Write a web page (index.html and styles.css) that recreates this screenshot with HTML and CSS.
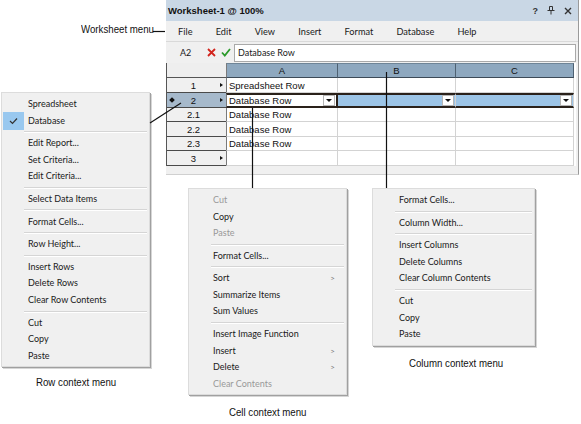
FILE: index.html
```html
<!DOCTYPE html>
<html>
<head>
<meta charset="utf-8">
<link rel="stylesheet" href="styles.css">
</head>
<body>
<div class="canvas">
  <div class="ws">
    <div class="titlebar">
      <span class="title">Worksheet-1 @ 100%</span>
      <span class="tools">
        <span class="q">?</span>
        <svg class="pin" width="8" height="9" viewBox="0 0 8 9"><path d="M2.5 0.5h3v4h-3z M0.5 4.5h7 M4 4.5v4" fill="none" stroke="#333" stroke-width="1"/></svg>
        <svg class="close" width="8" height="8" viewBox="0 0 8 8"><path d="M1 1L7 7M7 1L1 7" stroke="#333" stroke-width="1.4"/></svg>
      </span>
    </div>
    <div class="menubar">
      <span>File</span><span>Edit</span><span>View</span><span>Insert</span><span>Format</span><span>Database</span><span>Help</span>
    </div>
    <div class="fbar">
      <span class="ref">A2</span>
      <svg class="xicon" width="9" height="9" viewBox="0 0 9 9"><path d="M1 1L8 8M8 1L1 8" stroke="#d2241c" stroke-width="1.8"/></svg>
      <svg class="okicon" width="10" height="9" viewBox="0 0 10 9"><path d="M1 4.5L3.8 7.5L9 1" fill="none" stroke="#2a9a2a" stroke-width="1.8"/></svg>
      <div class="input">Database Row</div>
    </div>
    <div class="grid">
      <div class="row hdr">
        <div class="rh"></div>
        <div class="c a">A</div>
        <div class="c b">B</div>
        <div class="c cc">C</div>
      </div>
      <div class="row">
        <div class="rh"><span class="num">1</span><span class="arr"></span></div>
        <div class="c a">Spreadsheet Row</div>
        <div class="c b"></div>
        <div class="c cc"></div>
      </div>
      <div class="row sel">
        <div class="rh"><span class="dot"></span><span class="num">2</span><span class="arr"></span></div>
        <div class="c a cur">Database Row<span class="dd"></span></div>
        <div class="c b hl"><span class="dd"></span></div>
        <div class="c cc hl"><span class="dd"></span></div>
      </div>
      <div class="row short">
        <div class="rh"><span class="num">2.1</span><span class="arr none"></span></div>
        <div class="c a">Database Row</div>
        <div class="c b"></div>
        <div class="c cc"></div>
      </div>
      <div class="row">
        <div class="rh"><span class="num">2.2</span><span class="arr none"></span></div>
        <div class="c a">Database Row</div>
        <div class="c b"></div>
        <div class="c cc"></div>
      </div>
      <div class="row short">
        <div class="rh"><span class="num">2.3</span><span class="arr none"></span></div>
        <div class="c a">Database Row</div>
        <div class="c b"></div>
        <div class="c cc"></div>
      </div>
      <div class="row">
        <div class="rh"><span class="num">3</span><span class="arr"></span></div>
        <div class="c a"></div>
        <div class="c b"></div>
        <div class="c cc"></div>
      </div>
    </div>
  </div>

  <div class="menu rowmenu">
    <div class="mi">Spreadsheet</div>
    <div class="mi"><span class="chk"><svg width="9" height="8" viewBox="0 0 9 8"><path d="M1 4L3.5 6.5L8 1.5" fill="none" stroke="#333" stroke-width="1.2"/></svg></span>Database</div>
    <div class="sep"></div>
    <div class="mi">Edit Report...</div>
    <div class="mi">Set Criteria...</div>
    <div class="mi">Edit Criteria...</div>
    <div class="sep"></div>
    <div class="mi">Select Data Items</div>
    <div class="sep"></div>
    <div class="mi">Format Cells...</div>
    <div class="sep"></div>
    <div class="mi">Row Height...</div>
    <div class="sep"></div>
    <div class="mi">Insert Rows</div>
    <div class="mi">Delete Rows</div>
    <div class="mi">Clear Row Contents</div>
    <div class="sep"></div>
    <div class="mi">Cut</div>
    <div class="mi">Copy</div>
    <div class="mi">Paste</div>
  </div>

  <div class="menu cellmenu">
    <div class="mi dis">Cut</div>
    <div class="mi">Copy</div>
    <div class="mi dis">Paste</div>
    <div class="sep"></div>
    <div class="mi">Format Cells...</div>
    <div class="sep"></div>
    <div class="mi">Sort<span class="sub">&gt;</span></div>
    <div class="mi">Summarize Items</div>
    <div class="mi">Sum Values</div>
    <div class="sep"></div>
    <div class="mi">Insert Image Function</div>
    <div class="mi">Insert<span class="sub">&gt;</span></div>
    <div class="mi">Delete<span class="sub">&gt;</span></div>
    <div class="mi dis">Clear Contents</div>
  </div>

  <div class="menu colmenu">
    <div class="mi">Format Cells...</div>
    <div class="sep"></div>
    <div class="mi">Column Width...</div>
    <div class="sep"></div>
    <div class="mi">Insert Columns</div>
    <div class="mi">Delete Columns</div>
    <div class="mi">Clear Column Contents</div>
    <div class="sep"></div>
    <div class="mi">Cut</div>
    <div class="mi">Copy</div>
    <div class="mi">Paste</div>
  </div>

  <div class="label lbl-ws">Worksheet menu</div>
  <div class="label lbl-row">Row context menu</div>
  <div class="label lbl-cell">Cell context menu</div>
  <div class="label lbl-col">Column context menu</div>

  <svg class="lines" width="581" height="424" viewBox="0 0 581 424">
    <g stroke="#111" stroke-width="1.2" fill="none">
      <path d="M153 31.5H165"/>
      <path d="M150 123L181 103"/>
      <path d="M252.5 108V188"/>
      <path d="M386.5 72V188"/>
    </g>
  </svg>
</div>
</body>
</html>
```

FILE: styles.css
```css
* { box-sizing: border-box; }
body { margin: 0; background: #fff; }
.canvas {
  position: relative;
  width: 581px;
  height: 424px;
  overflow: hidden;
  font-family: Lato, "Open Sans", sans-serif;
  font-size: 9px;
  color: #1a1a1a;
}

/* worksheet window */
.ws {
  position: absolute;
  left: 166px;
  top: 0;
  width: 413px;
  height: 175px;
  background: #f0f0f0;
  border-right: 1px solid #9a9a9a;
  border-bottom: 1px solid #d0d0d0;
  display: flex;
  flex-direction: column;
}
.titlebar {
  height: 21px;
  background: #c9d7e5;
  display: flex;
  align-items: center;
  justify-content: space-between;
  padding: 0 6px 0 2px;
}
.title { font: bold 9.5px "Liberation Sans", Arial, sans-serif; color: #111; }
.tools { display: flex; align-items: center; gap: 9px; }
.q { font: bold 9px "Liberation Sans", sans-serif; color: #333; }
.menubar {
  height: 21px;
  display: flex;
  align-items: center;
  padding-left: 0.5px;
  border-bottom: 1px solid #d9d9d9;
  font-size: 9.2px;
}
.menubar span { padding: 0 11.6px; }
.fbar {
  height: 21px;
  display: flex;
  align-items: center;
  padding-left: 14px;
}
.ref { width: 27px; }
.okicon { margin-left: 5px; }
.input {
  margin-left: 3px;
  width: 342px;
  height: 18px;
  background: #fff;
  border: 1px solid #a9a9a9;
  padding-left: 3px;
  line-height: 16px;
}

/* grid */
.grid {
  width: 410px;
  background: #fff;
  border-left: 1px solid #555;
  font: 9.5px "Liberation Sans", Arial, sans-serif;
  color: #111;
}
.row { display: flex; height: 15px; }
.row.short { height: 14px; }
.rh {
  width: 59px;
  display: flex;
  align-items: center;
  background: #f0f0f0;
  border-bottom: 1px solid #4a4a4a;
  position: relative;
}
.num { flex: 1; text-align: center; }
.arr {
  width: 6px;
  height: 100%;
  display: flex;
  align-items: center;
}
.arr::before {
  content: "";
  border-left: 3px solid #111;
  border-top: 2.5px solid transparent;
  border-bottom: 2.5px solid transparent;
}
.arr.none::before { display: none; }
.dot {
  position: absolute;
  left: 3px;
  top: 5px;
  width: 4px;
  height: 4px;
  background: #111;
  transform: rotate(45deg);
}
.c {
  border-right: 1px solid #d3d3d3;
  border-bottom: 1px solid #d3d3d3;
  padding-left: 2px;
  display: flex;
  align-items: center;
  position: relative;
  white-space: nowrap;
}
.c.a { width: 112px; border-left: 1px solid #7a7a7a; }
.c.b { width: 118px; }
.c.cc { width: 118px; }
.hdr { height: 15px; }
.hdr .rh { background: #eeeeee; border-bottom: 1px solid #555; }
.hdr .c {
  background: #8ea8bf;
  justify-content: center;
  padding-left: 0;
  border-right: 1px solid #4e6172;
  border-bottom: 1px solid #3c4a57;
  border-top: 1px solid #6f8597;
}
.sel .rh { background: #a6b9cb; }
.sel .c {
  border-top: 2px solid #2a211a;
  border-bottom: 2px solid #2a211a;
}
.sel .c.cur { border-right: 2px solid #2a211a; }
.c.hl { background: #9cc4e6; }
.dd {
  position: absolute;
  right: 1px;
  top: 0;
  width: 12px;
  height: 11px;
  background: #fff;
  border: 1px solid #b5b5b5;
  display: flex;
  align-items: center;
  justify-content: center;
}
.dd::before {
  content: "";
  border-top: 3px solid #111;
  border-left: 3px solid transparent;
  border-right: 3px solid transparent;
}

/* context menus */
.menu {
  position: absolute;
  background: #f0f0f0;
  border: 1px solid #dcdcdc;
  box-shadow: 1px 1px 0 #a0a0a0, 2px 2px 0 #d6d6d6;
  padding: 3px 2px 2px 2px;
}
.rowmenu { left: 1px; top: 92px; width: 149px; }
.cellmenu { left: 188px; top: 188px; width: 159px; }
.colmenu { left: 372px; top: 188px; width: 163px; }
.mi {
  height: 16.5px;
  line-height: 16.5px;
  padding-left: 24px;
  position: relative;
  white-space: nowrap;
}
.cellmenu .mi { padding-left: 22px; }
.mi.dis { color: #999; }
.sep {
  height: 2px;
  border-top: 1px solid #d5d5d5;
  border-bottom: 1px solid #fff;
  margin: 2.1px 0 2.1px 20px;
}
.chk {
  position: absolute;
  left: -1px;
  top: -1px;
  width: 21px;
  height: 18px;
  background: #99c8ef;
  display: flex;
  align-items: center;
  justify-content: center;
}
.sub {
  position: absolute;
  right: 9px;
  top: 0;
  color: #777;
  font-size: 8px;
}

/* annotation labels */
.label {
  position: absolute;
  font: 11px "Liberation Sans", Arial, sans-serif;
  color: #111;
  white-space: nowrap;
  transform: scaleX(0.88);
  transform-origin: 0 0;
}
.lbl-ws { left: 81px; top: 23px; }
.lbl-row { left: 36px; top: 376px; }
.lbl-cell { left: 229px; top: 406px; }
.lbl-col { left: 409px; top: 357px; }

.lines {
  position: absolute;
  left: 0;
  top: 0;
  pointer-events: none;
}
```
